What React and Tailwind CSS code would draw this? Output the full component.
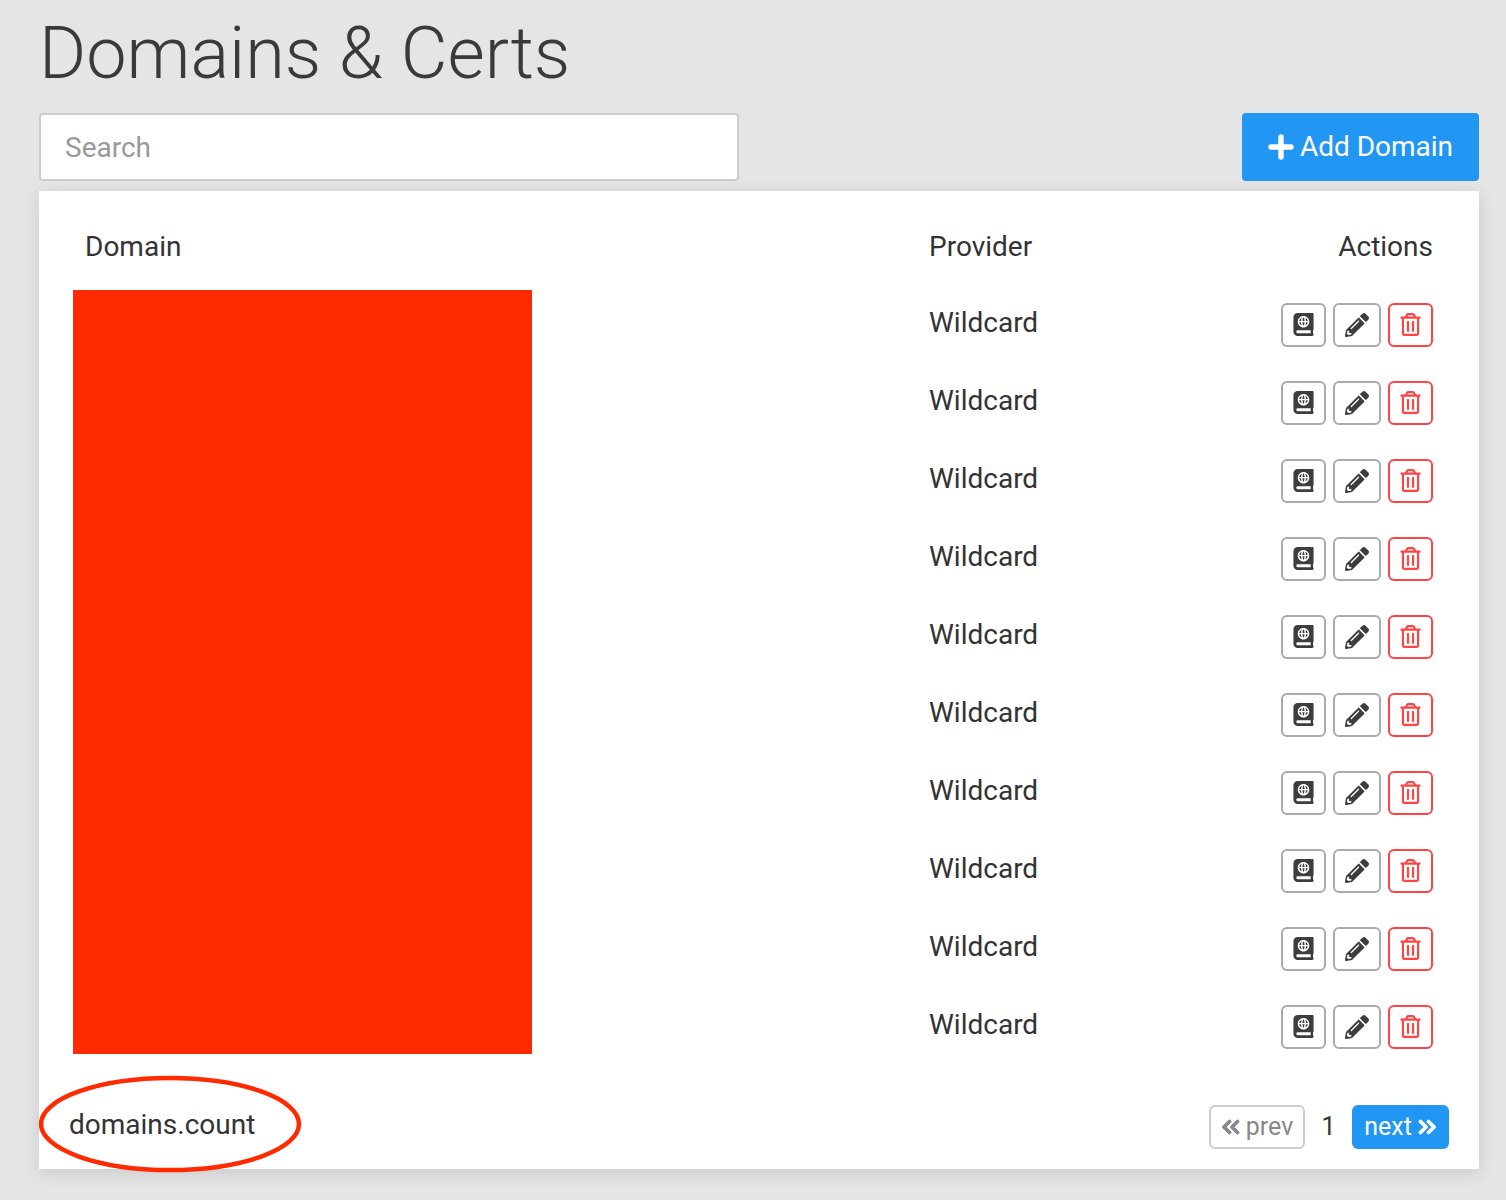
import React from 'react';
import { FaAtlas, FaPencilAlt, FaRegTrashAlt } from 'react-icons/fa';

const rows = Array.from({ length: 10 }, (_, i) => i);

const DoubleAngle = ({ flip }) => (
  <svg width="19" height="16" viewBox="0 0 19 16" fill="none" stroke="currentColor" strokeWidth="3.8" strokeLinecap="round" strokeLinejoin="round" className={flip ? 'rotate-180' : ''}>
    <path d="M8.5 2.5 L3 8 L8.5 13.5" />
    <path d="M16.5 2.5 L11 8 L16.5 13.5" />
  </svg>
);

const DomainRow = () => (
  <div className="flex h-[78px] items-start">
    <div className="w-[844px]" />
    <div className="flex-1 pt-[15px] text-[28px] leading-[38px]">Wildcard</div>
    <div className="flex gap-[7px] pt-[14px]">
      <button className="flex h-[44px] w-[45px] items-center justify-center rounded-[6px] border-2 border-[#aaaaaa] text-[#3d3d3d]">
        <FaAtlas size={23} className="-translate-y-px" />
      </button>
      <button className="flex h-[44px] w-[48px] items-center justify-center rounded-[6px] border-2 border-[#aaaaaa] text-[#3d3d3d]">
        <FaPencilAlt size={24} />
      </button>
      <button className="flex h-[44px] w-[45px] items-center justify-center rounded-[6px] border-2 border-[#ff4444] text-[#ff4444]">
        <FaRegTrashAlt size={23} className="-translate-y-px" />
      </button>
    </div>
  </div>
);

const App = () => {
  return (
    <div className="min-h-[1200px] bg-[#e5e5e5] pl-[39px] pr-[27px] font-['Roboto',sans-serif] text-[#333333]">
      <h1 className="h-[113px] pt-[10px] text-[72px] font-light leading-[88px] text-[#3a3a3a]">Domains &amp; Certs</h1>

      <div className="flex items-start justify-between">
        <input
          type="text"
          placeholder="Search"
          className="h-[68px] w-[700px] rounded-[4px] border-2 border-[#cccccc] bg-white px-[24px] text-[28px] outline-none placeholder:text-[#999999]"
        />
        <button className="flex h-[68px] w-[237px] items-center justify-center gap-[6px] rounded-[4px] bg-[#2196f3] text-[28px] text-white">
          <svg width="26" height="26" viewBox="0 0 26 26" fill="none" stroke="currentColor" strokeWidth="5.4" strokeLinecap="round">
            <path d="M13 3 V23 M3 13 H23" />
          </svg>
          Add Domain
        </button>
      </div>

      <div className="relative mt-[10px] h-[978px] bg-white px-[46px] shadow-[0_4px_16px_rgba(0,0,0,0.12)]">
        <div className="flex h-[90px] items-start pt-[37px] text-[28px] leading-[38px]">
          <div className="w-[844px]">Domain</div>
          <div className="flex-1">Provider</div>
          <div>Actions</div>
        </div>

        <div className="mt-[8px]">
          {rows.map((row) => (
            <DomainRow key={row} />
          ))}
        </div>

        {/* redaction block over the domain column */}
        <div className="absolute left-[34px] top-[99px] h-[764px] w-[459px] bg-[#ff2a00]" />

        <div className="absolute inset-x-0 bottom-0 flex h-[90px] items-start justify-between px-[30px] pt-[26px]">
          <div className="pt-px text-[28px] leading-[38px]">domains.count</div>
          <div className="flex items-center">
            <button className="flex h-[44px] w-[96px] items-center justify-center gap-[6px] rounded-[6px] border-2 border-[#cccccc] text-[25px] text-[#888888]">
              <DoubleAngle />
              prev
            </button>
            <span className="w-[47px] text-center text-[25px]">1</span>
            <button className="flex h-[44px] w-[97px] items-center justify-center gap-[6px] rounded-[6px] bg-[#2196f3] text-[25px] text-white">
              next
              <DoubleAngle flip />
            </button>
          </div>
        </div>

        {/* hand drawn annotation round the count */}
        <svg className="absolute left-0 top-[884px]" width="264" height="98" viewBox="0 0 264 98" fill="none">
          <ellipse cx="131" cy="49" rx="129" ry="46" stroke="#ff2a00" strokeWidth="4.5" />
        </svg>
      </div>
    </div>
  );
};

export default App;
